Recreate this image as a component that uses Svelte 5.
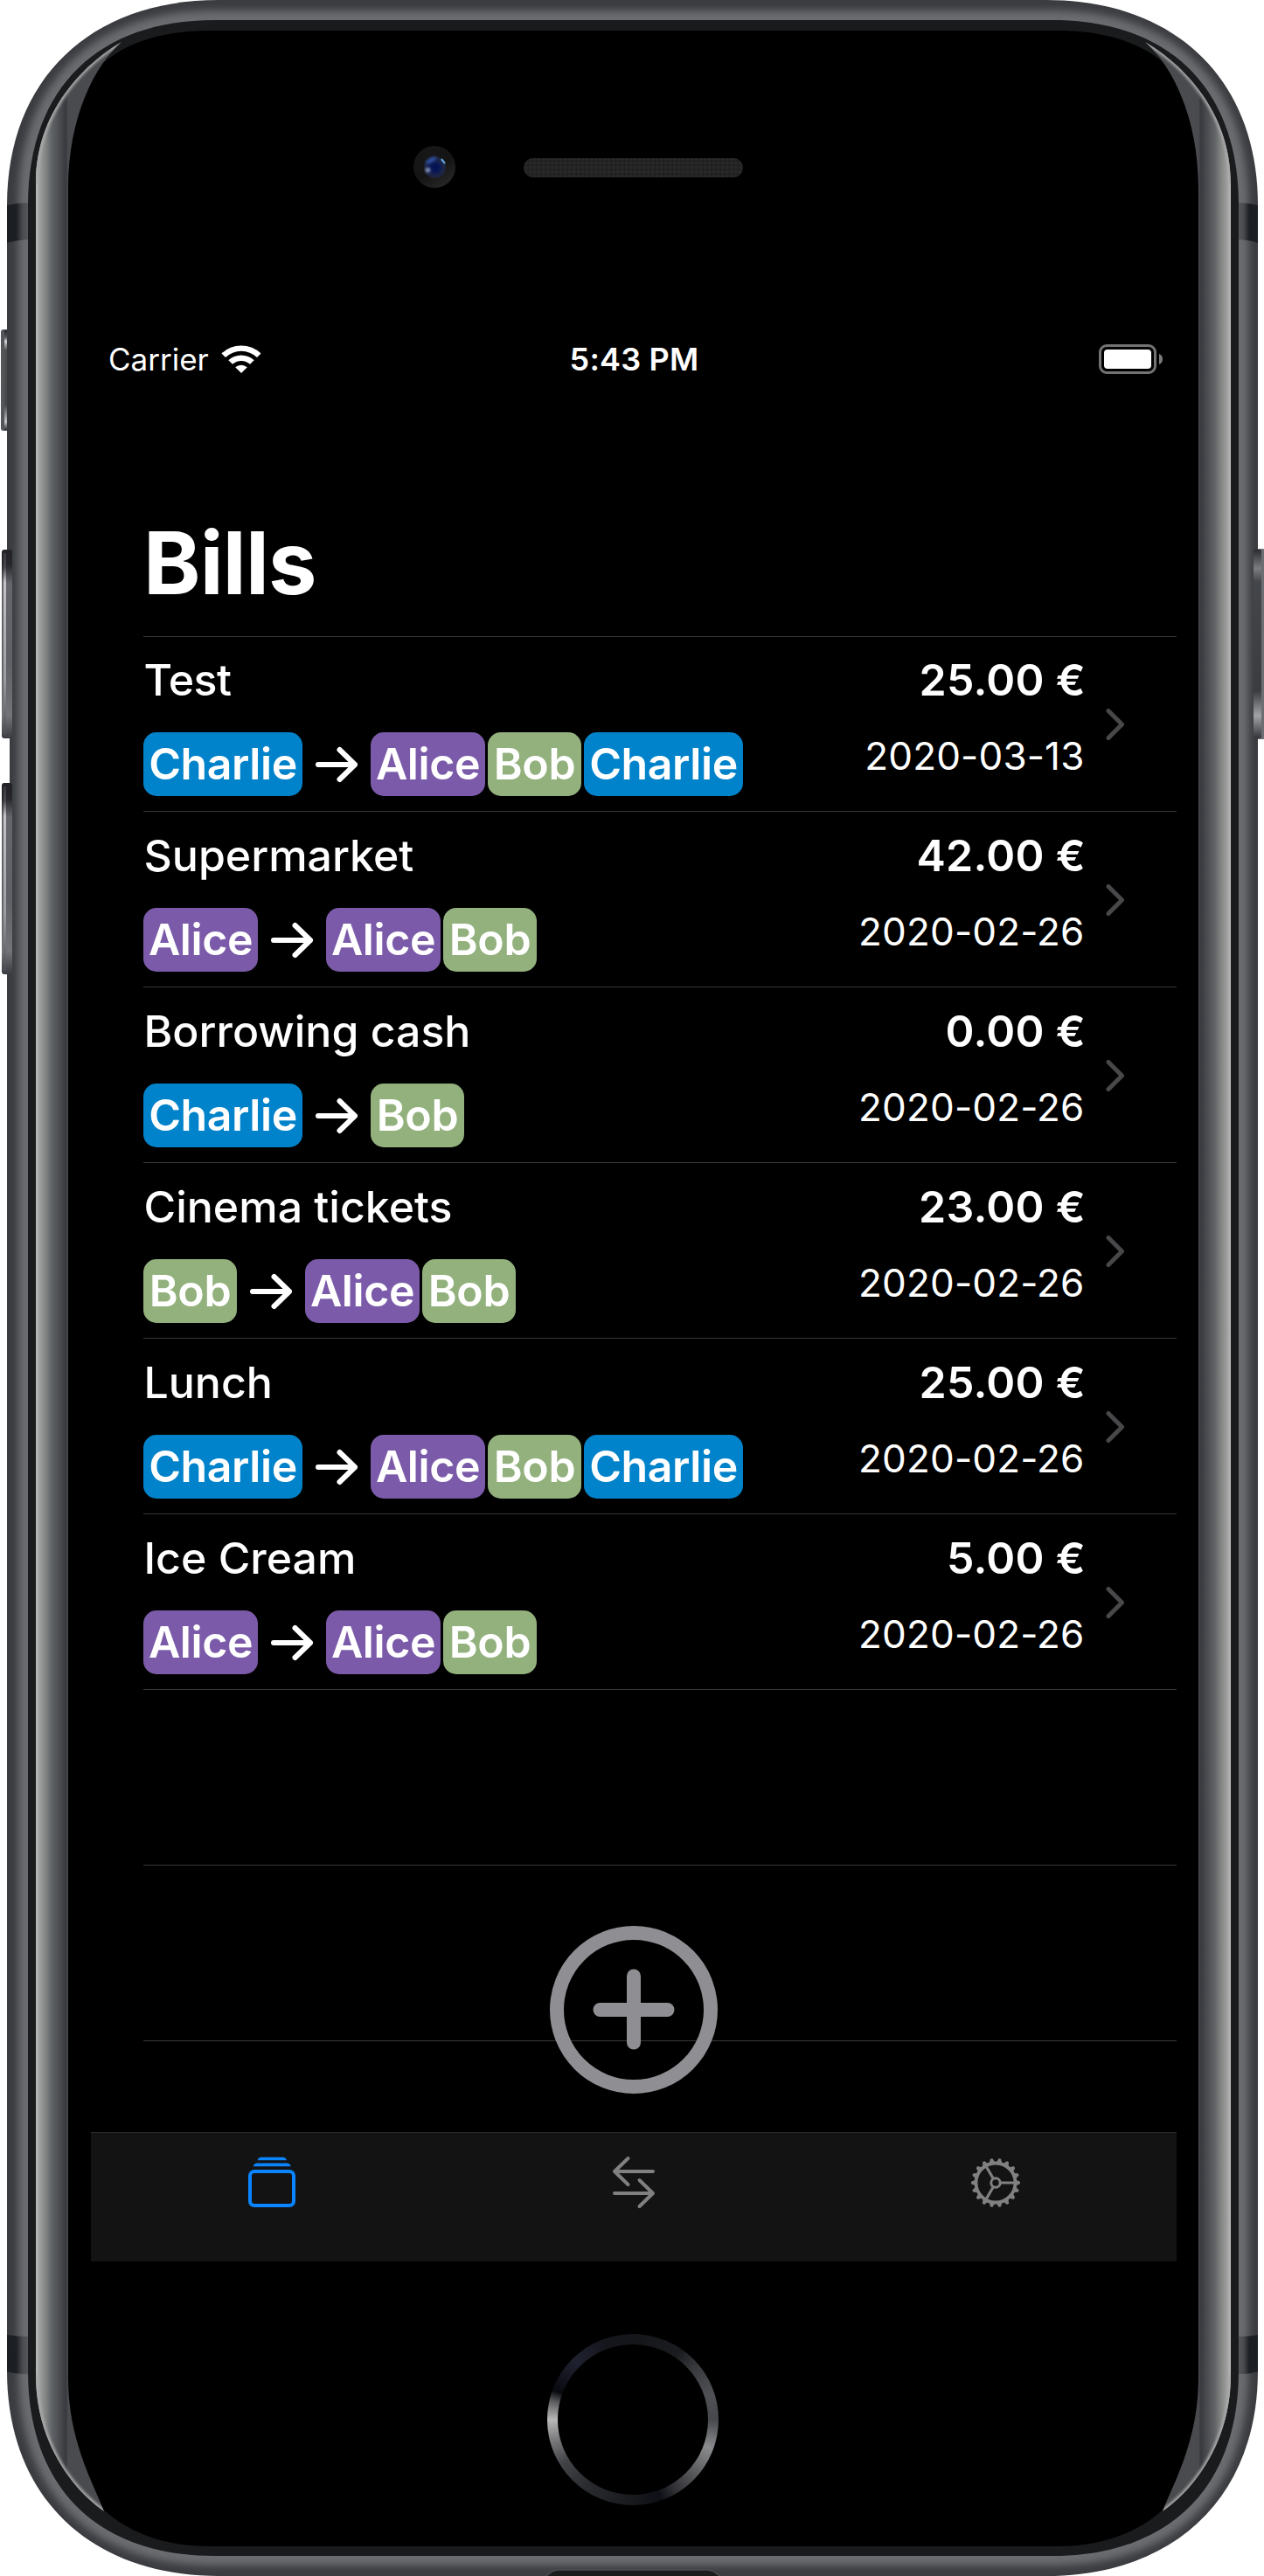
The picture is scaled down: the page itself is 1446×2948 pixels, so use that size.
<script>
  const bills = [
    { title: 'Test', amount: '25.00 €', date: '2020-03-13', from: 'Charlie', to: ['Alice', 'Bob', 'Charlie'] },
    { title: 'Supermarket', amount: '42.00 €', date: '2020-02-26', from: 'Alice', to: ['Alice', 'Bob'] },
    { title: 'Borrowing cash', amount: '0.00 €', date: '2020-02-26', from: 'Charlie', to: ['Bob'] },
    { title: 'Cinema tickets', amount: '23.00 €', date: '2020-02-26', from: 'Bob', to: ['Alice', 'Bob'] },
    { title: 'Lunch', amount: '25.00 €', date: '2020-02-26', from: 'Charlie', to: ['Alice', 'Bob', 'Charlie'] },
    { title: 'Ice Cream', amount: '5.00 €', date: '2020-02-26', from: 'Alice', to: ['Alice', 'Bob'] }
  ];
  const teeth = Array.from({ length: 18 }, (_, i) => i * 20);
  const crescent =
    'M139 48 C106 67 41 120 41 210 V2718 C41 2790 78 2845 119 2874 C107 2842 78 2794 78 2721 V215 C78 135 108 75 139 48 Z';
</script>

{#snippet pill(name)}
  <span class="pill {name.toLowerCase()}">{name}</span>
{/snippet}

<div class="phone">
  <svg class="frame" viewBox="0 0 1446 2948" aria-hidden="true">
    <defs>
      <linearGradient id="side" gradientUnits="userSpaceOnUse" x1="41" x2="78" y1="0" y2="0">
        <stop offset="0" stop-color="#bcbcbc" />
        <stop offset="0.12" stop-color="#9d9e9d" />
        <stop offset="0.3" stop-color="#828583" />
        <stop offset="0.5" stop-color="#606366" />
        <stop offset="0.72" stop-color="#4c4d51" />
        <stop offset="0.93" stop-color="#393a3f" />
        <stop offset="1" stop-color="#4a4b4f" />
      </linearGradient>
      <linearGradient id="band" x1="0" x2="1" y1="0" y2="0">
        <stop offset="0" stop-color="#1b1f24" />
        <stop offset="0.45" stop-color="#1c2025" />
        <stop offset="0.75" stop-color="#4a4b4f" />
        <stop offset="1" stop-color="#56575b" />
      </linearGradient>
      <linearGradient id="mute" x1="0" x2="0" y1="0" y2="1">
        <stop offset="0" stop-color="#24252a" />
        <stop offset="0.07" stop-color="#55565a" />
        <stop offset="0.11" stop-color="#d4d4d8" />
        <stop offset="0.2" stop-color="#4e4e50" />
        <stop offset="0.75" stop-color="#47484b" />
        <stop offset="0.92" stop-color="#c2c3c6" />
        <stop offset="1" stop-color="#2c2d33" />
      </linearGradient>
      <linearGradient id="volume" x1="0" x2="0" y1="0" y2="1">
        <stop offset="0" stop-color="#222226" />
        <stop offset="0.08" stop-color="#26262b" />
        <stop offset="0.18" stop-color="#66676d" />
        <stop offset="0.6" stop-color="#606166" />
        <stop offset="0.88" stop-color="#737478" />
        <stop offset="1" stop-color="#3b3c41" />
      </linearGradient>
      <linearGradient id="shine" x1="0" x2="0" y1="0" y2="1">
        <stop offset="0" stop-color="#3a3b3f" />
        <stop offset="0.08" stop-color="#4a4a4e" />
        <stop offset="0.16" stop-color="#c4c4c6" />
        <stop offset="0.7" stop-color="#9a9b9e" />
        <stop offset="1" stop-color="#4c4d52" />
      </linearGradient>
      <linearGradient id="power" x1="0" x2="0" y1="0" y2="1">
        <stop offset="0" stop-color="#2b2c30" />
        <stop offset="0.1" stop-color="#7c7d81" />
        <stop offset="0.17" stop-color="#43464a" />
        <stop offset="0.75" stop-color="#3b3c40" />
        <stop offset="0.88" stop-color="#a2a3a6" />
        <stop offset="1" stop-color="#33343a" />
      </linearGradient>
      <radialGradient id="lens">
        <stop offset="0" stop-color="#02114e" />
        <stop offset="0.35" stop-color="#071655" />
        <stop offset="0.75" stop-color="#1c2448" />
        <stop offset="1" stop-color="#1f2537" />
      </radialGradient>
      <linearGradient id="lensRing" x1="0.2" y1="0.1" x2="0.8" y2="1">
        <stop offset="0" stop-color="#171717" />
        <stop offset="0.5" stop-color="#141414" />
        <stop offset="1" stop-color="#2a2a2a" />
      </linearGradient>
      <pattern id="mesh" width="5" height="5" patternUnits="userSpaceOnUse">
        <rect width="5" height="5" fill="#202020" />
        <rect width="3.4" height="3.4" fill="#292929" />
      </pattern>
      <filter id="soft" x="-20%" y="-5%" width="140%" height="110%"><feGaussianBlur stdDeviation="4" /></filter>
      <filter id="tiny" x="-50%" y="-50%" width="200%" height="200%"><feGaussianBlur stdDeviation="1.6" /></filter>
      <clipPath id="body">
        <path d="M8 235 C8 90 104 0 250 0 H1197 C1343 0 1439 90 1439 235 V2713 C1439 2858 1343 2948 1197 2948 H250 C104 2948 8 2858 8 2713 Z" />
      </clipPath>
      <clipPath id="edge"><path d={crescent} /></clipPath>
      <g id="glass">
        <path d={crescent} fill="url(#side)" />
        <g clip-path="url(#edge)">
          <path d="M139 48 C106 67 41 120 41 210" fill="none" stroke="#a8a8a8" stroke-width="5" filter="url(#tiny)" />
          <path d="M41 2718 C41 2790 78 2845 119 2874" fill="none" stroke="#a8a8a8" stroke-width="5" filter="url(#tiny)" />
        </g>
      </g>
    </defs>

    <!-- side buttons -->
    <path d="M11 625 H20 V1120 H11 Z" fill="#3a3b3f" />
    <rect x="1" y="377" width="12" height="116" rx="3" fill="#55565a" />
    <rect x="5" y="378" width="8" height="114" fill="url(#mute)" />
    <rect x="1434" y="628" width="14" height="218" rx="4" fill="#6d6e72" />
    <rect x="1434" y="629" width="9" height="216" rx="2" fill="url(#power)" />

    <!-- metal rim -->
    <g clip-path="url(#body)">
      <rect width="1446" height="2948" fill="#3b3c40" />
      <path d="M32 235 C32 98 115 23 245 23 H1204 C1334 23 1417 98 1417 235 V2713 C1417 2850 1334 2925 1204 2925 H245 C115 2925 32 2850 32 2713 Z" fill="none" stroke="#6b6c70" stroke-width="22" filter="url(#soft)" />
      <path d="M8 235 Q20 232 32 232 V274 Q18 275 8 278 Z" fill="url(#band)" />
      <path d="M8 2672 Q20 2674 32 2674 V2717 Q18 2717 8 2714 Z" fill="url(#band)" />
      <g transform="translate(1449 0) scale(-1 1)">
        <path d="M10 235 Q20 232 32 232 V274 Q18 275 10 278 Z" fill="url(#band)" />
        <path d="M10 2672 Q20 2674 32 2674 V2717 Q18 2717 10 2714 Z" fill="url(#band)" />
      </g>
      <path d="M622 2950 L630 2944 Q634 2941 640 2941 H808 Q814 2941 818 2944 L826 2950 Z" fill="#1b1d1c" stroke="#4c4d50" stroke-width="1.5" />
    </g>
    <rect x="7" y="845" width="4" height="51" fill="#fff" />
    <rect x="2" y="629" width="12" height="216" rx="3" fill="url(#volume)" />
    <rect x="4" y="633" width="3" height="208" fill="url(#shine)" />
    <rect x="2" y="896" width="12" height="219" rx="3" fill="url(#volume)" />
    <rect x="4" y="900" width="3" height="211" fill="url(#shine)" />
    <rect x="1434" y="629" width="5" height="216" fill="url(#power)" />

    <!-- front glass -->
    <path d="M32 235 C32 98 115 23 245 23 H1204 C1334 23 1417 98 1417 235 V2713 C1417 2850 1334 2925 1204 2925 H245 C115 2925 32 2850 32 2713 Z" fill="#191b1c" />
    <path d="M60 235 C60 98 122 35 240 35 H1209 C1327 35 1389 98 1389 235 V2713 C1389 2834 1327 2914 1209 2914 H240 C122 2914 60 2834 60 2713 Z" fill="#000" />
    <use href="#glass" />
    <use href="#glass" transform="translate(1449 0) scale(-1 1)" />

    <!-- camera and speaker -->
    <circle cx="497" cy="191" r="24" fill="url(#lensRing)" />
    <circle cx="497.5" cy="191.5" r="12.5" fill="url(#lens)" />
    <ellipse cx="493" cy="183.5" rx="7" ry="2.6" fill="#2f4fa0" transform="rotate(-30 493 183.5)" filter="url(#tiny)" />
    <circle cx="489.5" cy="194.5" r="2.6" fill="#92a5c8" filter="url(#tiny)" />
    <path d="M505 182 L509 187" stroke="#5fa3dc" stroke-width="2.2" />
    <rect x="599" y="181" width="251" height="22" rx="11" fill="url(#mesh)" />
  </svg>

  <main class="screen">
    <header class="status">
      <div class="carrier">
        <span>Carrier</span>
        <svg width="46" height="34" viewBox="0 0 46 34">
          <path d="M0.5 10.5 A32.5 32.5 0 0 1 45.5 10.5 L41 15 A26 26 0 0 0 5 15 Z" />
          <path d="M8.3 18.2 A21.5 21.5 0 0 1 37.7 18.2 L33 22.8 A15 15 0 0 0 13 22.8 Z" />
          <path d="M16.2 26.2 A10.5 10.5 0 0 1 29.8 26.2 L23 33 Z" />
        </svg>
      </div>
      <div class="time">5:43 PM</div>
      <div class="battery">
        <svg width="76" height="34" viewBox="0 0 76 34">
          <rect x="1.5" y="1.5" width="63" height="31" rx="7.5" fill="none" stroke="#737373" stroke-width="3" />
          <rect x="6" y="6" width="54" height="22" rx="4" />
          <path d="M69 11 Q73 12.5 73 17 Q73 21.5 69 23 Z" fill="#7c7c7c" />
        </svg>
      </div>
    </header>

    <h1>Bills</h1>

    <section class="list">
      {#each bills as bill}
        <article class="row">
          <div class="info">
            <h2>{bill.title}</h2>
            <div class="flow">
              {@render pill(bill.from)}
              <svg class="arrow" width="78" height="73" viewBox="0 0 78 73">
                <path d="M18 37 H60 M42.5 20 L60 37 L42.5 54" />
              </svg>
              <div class="payees">
                {#each bill.to as name}{@render pill(name)}{/each}
              </div>
            </div>
          </div>
          <div class="figures">
            <div class="amount">{bill.amount}</div>
            <div class="date">{bill.date}</div>
          </div>
          <svg class="chevron" width="28" height="40" viewBox="0 0 28 40">
            <path d="M6 4.500 L21.500 20 L6 35.500" />
          </svg>
        </article>
      {/each}
      <div class="row"></div>
      <div class="row"></div>
    </section>

    <button class="add" aria-label="Add bill">
      <svg width="192" height="192" viewBox="0 0 192 192">
        <circle cx="96" cy="96" r="88" />
        <path d="M57.5 96 H134.5 M96 57.5 V133.5" />
      </svg>
    </button>

    <nav class="tabs">
      <div class="tab active">
        <svg width="90" height="90" viewBox="266 2453 90 90">
          <rect x="286" y="2485" width="50" height="39" rx="5" fill="none" stroke="currentColor" stroke-width="4" />
          <path d="M289.5 2479.2 Q291 2475.6 294 2475.6 H328.5 Q331.5 2475.6 332.8 2479.2 Z M294.5 2472.3 Q295.5 2468.8 298.5 2468.8 H324 Q327 2468.8 328 2472.3 Z" fill="currentColor" />
        </svg>
      </div>
      <div class="tab">
        <svg width="90" height="90" viewBox="680 2453 90 90">
          <path d="M747 2485 H703 M718.5 2470 L703 2485 L718.5 2500 M703 2510 H747 M731.5 2495 L747 2510 L731.5 2525" fill="none" stroke="currentColor" stroke-width="4" stroke-linecap="round" stroke-linejoin="round" />
        </svg>
      </div>
      <div class="tab">
        <svg width="90" height="90" viewBox="-45 -45 90 90">
          <g fill="none" stroke="currentColor" stroke-width="3.2">
            <circle r="22.5" stroke-width="3.8" />
            <circle r="5.2" stroke-width="3" />
            <path d="M6 0 H22 M-3 -5.2 L-11.3 -19.5 M-3 5.2 L-11.3 19.5" />
          </g>
          {#each teeth as angle}
            <path d="M23 -3.3 L27.6 -1.5 Q28.6 0 27.6 1.5 L23 3.3 Z" fill="currentColor" transform="rotate({angle})" />
          {/each}
        </svg>
      </div>
    </nav>
  </main>

  <div class="home"></div>
</div>

<style>
  :global(body) { background: #fff; }
  .phone {
    position: relative;
    width: 1446px;
    height: 2948px;
    box-sizing: border-box;
    padding: 380px 100px 0 104px;
    overflow: hidden;
    color: #fff;
    font-family: Inter, 'Liberation Sans', sans-serif;
  }
  .frame { position: absolute; inset: 0; width: 1446px; height: 2948px; }
  .screen {
    position: relative;
    display: flex;
    flex-direction: column;
    width: 1242px;
    height: 2208px;
    background: #000;
  }
  .status {
    display: grid;
    grid-template-columns: 1fr auto 1fr;
    align-items: center;
    height: 60px;
    padding: 0 13px 0 20px;
    flex: none;
  }
  .status svg { display: block; fill: #fff; }
  .carrier { display: flex; align-items: center; gap: 14px; font-size: 35px; }
  .carrier span, .time { line-height: 60px; padding-top: 1px; }
  .time { padding-right: 6px; font-size: 36px; font-weight: 560; letter-spacing: 0.2px; }
  .battery { display: flex; justify-content: flex-end; }
  h1 {
    margin: 144px 0 24px 60px;
    font-size: 99px;
    line-height: 120px;
    font-weight: 700;
    letter-spacing: -0.75px;
  }
  .list { flex: none; }
  .row {
    display: flex;
    box-sizing: border-box;
    height: 201px;
    margin-left: 60px;
    border-bottom: 1px solid #37373a;
  }
  .row:first-child { box-shadow: inset 0 1px #37373a; }
  .info { flex: 1; padding-top: 20px; }
  h2 {
    margin: 0 0 30px;
    padding-left: 0.5px;
    font-size: 50px;
    line-height: 60px;
    font-weight: 530;
  }
  .row:first-child h2 { letter-spacing: -0.5px; }
  .flow, .payees { display: flex; }
  .payees { gap: 3px; }
  .pill {
    height: 73px;
    border-radius: 15px;
    font-size: 50px;
    line-height: 73px;
    font-weight: 580;
    letter-spacing: -0.4px;
    text-align: center;
  }
  .charlie { width: 182px; background: #0083ca; }
  .alice { width: 131px; background: #7b5ba9; }
  .bob { width: 107px; background: #93b17d; }
  .arrow path, .chevron path { fill: none; stroke: #fff; stroke-width: 6; stroke-linecap: round; stroke-linejoin: round; }
  .figures { padding-top: 20px; text-align: right; }
  .amount { font-size: 50px; line-height: 60px; font-weight: 600; letter-spacing: 0.3px; }
  .date { margin-top: 27px; padding-right: 1.5px; font-size: 44px; line-height: 60px; letter-spacing: 0.15px; }
  .chevron { margin: 81px 56px 0 20px; }
  .chevron path { stroke: #48484a; stroke-width: 5; }
  .add {
    position: absolute;
    left: 525px;
    top: 1824px;
    padding: 0;
    border: 0;
    background: none;
  }
  .add svg { display: block; fill: none; stroke: #8e8e93; stroke-width: 16; stroke-linecap: round; }
  .tabs {
    display: grid;
    grid-template-columns: repeat(3, 1fr);
    box-sizing: border-box;
    height: 148px;
    margin-top: auto;
    border-top: 1px solid #2b2b2b;
    background: #131313;
  }
  .tab { display: flex; justify-content: center; padding-top: 12px; color: #808080; }
  .active { color: #0a84ff; }
  .home {
    position: relative;
    width: 196px;
    height: 196px;
    margin: 83px 0 0 522px;
    border-radius: 50%;
    background: conic-gradient(#15161a 0deg, #1b1c1f 35deg, #38393c 50deg, #505155 72deg, #47484c 90deg, #8b8c8e 110deg, #606163 128deg, #333337 148deg, #0e0f17 161deg, #18191d 180deg, #2a2b2f 215deg, #424347 238deg, #757577 254deg, #b8b8b8 270deg, #5a5a5c 283deg, #090a0f 290deg, #1f2130 315deg, #15161d 340deg, #15161a 360deg);
  }
  .home::after {
    content: '';
    position: absolute;
    inset: 12px;
    border-radius: 50%;
    background: #000;
  }
</style>
